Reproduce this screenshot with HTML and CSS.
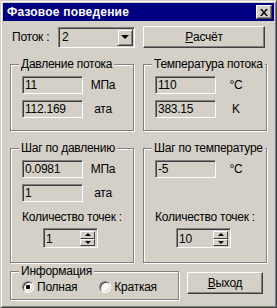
FILE: index.html
```html
<!DOCTYPE html>
<html lang="ru">
<head>
    <meta charset="UTF-8">
    <title>Фазовое поведение</title>
    <link rel="stylesheet" href="styles.css">
</head>
<body>

<div class="window">
    <div class="titlebar">
        <span class="title">Фазовое поведение</span>
        <span class="close">
            <svg width="8" height="7" viewBox="0 0 8 7"><path d="M0 0h2l2 2.5L6 0h2L5 3.5 8 7H6L4 4.5 2 7H0l3-3.5z" fill="#000"/></svg>
        </span>
    </div>

    <div class="content">
        <div class="toprow">
            <span class="label">Поток :</span>
            <div class="combo">
                <span class="combo-val">2</span>
                <span class="drop"><span class="tri-down"></span></span>
            </div>
            <span class="btn calc"><u>Р</u>асчёт</span>
        </div>

        <div class="groups">
            <fieldset class="group">
                <legend>Давление потока</legend>
                <div class="field"><span class="edit">11</span><span class="unit">МПа</span></div>
                <div class="field"><span class="edit">112.169</span><span class="unit">ата</span></div>
            </fieldset>

            <fieldset class="group">
                <legend>Температура потока</legend>
                <div class="field"><span class="edit">110</span><span class="unit">°C</span></div>
                <div class="field"><span class="edit">383.15</span><span class="unit">K</span></div>
            </fieldset>

            <fieldset class="group step">
                <legend>Шаг по давлению</legend>
                <div class="field"><span class="edit">0.0981</span><span class="unit">МПа</span></div>
                <div class="field"><span class="edit">1</span><span class="unit">ата</span></div>
                <div class="count">Количество точек :</div>
                <div class="spin">
                    <span class="spin-val">1</span>
                    <span class="spin-btns">
                        <span class="arrow"><span class="tri-up"></span></span>
                        <span class="arrow"><span class="tri-down"></span></span>
                    </span>
                </div>
            </fieldset>

            <fieldset class="group step">
                <legend>Шаг по температуре</legend>
                <div class="field"><span class="edit">-5</span><span class="unit">°C</span></div>
                <div class="field empty"></div>
                <div class="count">Количество точек :</div>
                <div class="spin">
                    <span class="spin-val">10</span>
                    <span class="spin-btns">
                        <span class="arrow"><span class="tri-up"></span></span>
                        <span class="arrow"><span class="tri-down"></span></span>
                    </span>
                </div>
            </fieldset>
        </div>

        <div class="bottomrow">
            <fieldset class="group info">
                <legend>Информация</legend>
                <div class="radios">
                    <span class="radio checked">Полная</span>
                    <span class="radio">Краткая</span>
                </div>
            </fieldset>
            <span class="btn exit"><u>В</u>ыход</span>
        </div>
    </div>
</div>

</body>
</html>
```

FILE: styles.css
```css
body {
    margin: 0;
    font-family: "Liberation Sans", Arial, sans-serif;
    font-size: 12px;
    letter-spacing: -0.25px;
    color: #000;
    background: #d4d0c8;
}
.window {
    width: 277px;
    height: 308px;
    box-sizing: border-box;
    background: #d4d0c8;
    border: 1px solid;
    border-color: #d4d0c8 #404040 #404040 #d4d0c8;
    box-shadow: inset 1px 1px #fff, inset -1px -1px #808080;
    padding: 2px;
    overflow: hidden;
}
.titlebar {
    height: 18px;
    background: #000080;
    color: #fff;
    display: flex;
    align-items: center;
    justify-content: space-between;
    padding: 0 2px 0 4px;
}
.title {
    font-weight: bold;
    font-size: 12px;
    letter-spacing: 0.2px;
}
.close {
    width: 16px;
    height: 14px;
    box-sizing: border-box;
    background: #d4d0c8;
    border: 1px solid;
    border-color: #fff #404040 #404040 #fff;
    box-shadow: inset -1px -1px #808080;
    display: flex;
    align-items: center;
    justify-content: center;
}
.content {
    padding: 5px 7px 0 7px;
}

/* top row */
.toprow {
    display: flex;
    align-items: center;
    height: 22px;
}
.label {
    margin-left: 2px;
    width: 46px;
}
.combo {
    width: 77px;
    height: 21px;
    box-sizing: border-box;
    border: 1px solid;
    border-color: #808080 #fff #fff #808080;
    box-shadow: inset 1px 1px #404040, inset -1px -1px #d4d0c8;
    padding: 2px 2px 2px 3px;
    display: flex;
    align-items: center;
    justify-content: space-between;
}
.drop {
    width: 16px;
    height: 17px;
    box-sizing: border-box;
    margin-right: -1px;
    border: 1px solid;
    border-color: #d4d0c8 #404040 #404040 #d4d0c8;
    box-shadow: inset 1px 1px #fff, inset -1px -1px #808080;
    display: flex;
    align-items: center;
    justify-content: center;
}
.tri-down {
    width: 0;
    height: 0;
    border-left: 4px solid transparent;
    border-right: 4px solid transparent;
    border-top: 4px solid #000;
}
.tri-up {
    width: 0;
    height: 0;
    border-left: 4px solid transparent;
    border-right: 4px solid transparent;
    border-bottom: 4px solid #000;
}
.btn {
    box-sizing: border-box;
    display: flex;
    align-items: center;
    justify-content: center;
    border: 1px solid;
    border-color: #fff #404040 #404040 #fff;
    box-shadow: inset -1px -1px #808080, inset 1px 1px #d4d0c8;
}
.calc {
    margin-left: 8px;
    width: 122px;
    height: 22px;
}

/* group boxes */
.groups {
    display: grid;
    grid-template-columns: 124px 124px;
    column-gap: 9px;
    row-gap: 10px;
    margin-top: 9px;
}
.group {
    margin: 0;
    min-width: 0;
    padding: 5px 0 12px 0;
    border: 1px solid #808080;
    box-shadow: inset 1px 1px #fff, 1px 1px #fff;
}
.group.step {
    padding-bottom: 14px;
}
.group legend {
    padding: 0 2px;
    margin-left: 8px;
    line-height: 14px;
    white-space: nowrap;
    background: #d4d0c8;
}
.field {
    display: flex;
    align-items: center;
    height: 18px;
    margin-left: 11px;
}
.field + .field {
    margin-top: 6px;
}
.edit {
    width: 61px;
    height: 18px;
    box-sizing: border-box;
    border: 1px solid;
    border-color: #808080 #fff #fff #808080;
    box-shadow: inset 1px 1px #404040, inset -1px -1px #d4d0c8;
    padding: 1px 0 0 2px;
    line-height: 15px;
}
.unit {
    width: 38px;
    margin-left: 1px;
    text-align: center;
}
.count {
    margin-top: 8px;
    text-align: center;
    line-height: 14px;
    white-space: nowrap;
}
.spin {
    margin: 4px 0 0 32px;
    width: 55px;
    height: 20px;
    box-sizing: border-box;
    border: 1px solid;
    border-color: #808080 #fff #fff #808080;
    box-shadow: inset 1px 1px #404040, inset -1px -1px #d4d0c8;
    padding: 2px 2px 1px 2px;
    display: flex;
    justify-content: space-between;
}
.spin-val {
    line-height: 16px;
}
.spin-btns {
    width: 15px;
    display: flex;
    flex-direction: column;
}
.arrow {
    flex: 1;
    box-sizing: border-box;
    border: 1px solid;
    border-color: #fff #404040 #404040 #fff;
    display: flex;
    align-items: center;
    justify-content: center;
}
.arrow .tri-up,
.arrow .tri-down {
    border-left-width: 3px;
    border-right-width: 3px;
}
.arrow .tri-up {
    border-bottom-width: 3px;
}
.arrow .tri-down {
    border-top-width: 3px;
}

/* bottom row */
.bottomrow {
    display: flex;
    align-items: flex-start;
    margin-top: 1px;
}
.info {
    width: 169px;
    box-sizing: border-box;
    padding: 2px 0 5px 0;
}
.radios {
    display: flex;
    align-items: center;
    height: 14px;
    margin-left: 11px;
}
.radio {
    display: flex;
    align-items: center;
    margin-right: 22px;
}
.radio::before {
    content: "";
    width: 12px;
    height: 12px;
    box-sizing: border-box;
    margin-right: 3px;
    border-radius: 50%;
    border: 1px solid;
    border-color: #808080 #fff #fff #808080;
    box-shadow: inset 1px 1px #404040, inset -1px -1px #d4d0c8;
    background: #fff;
}
.radio.checked::before {
    background: radial-gradient(circle, #000 0 2px, #fff 2.5px);
}
.exit {
    margin: 8px 0 0 8px;
    width: 76px;
    height: 22px;
}
```
